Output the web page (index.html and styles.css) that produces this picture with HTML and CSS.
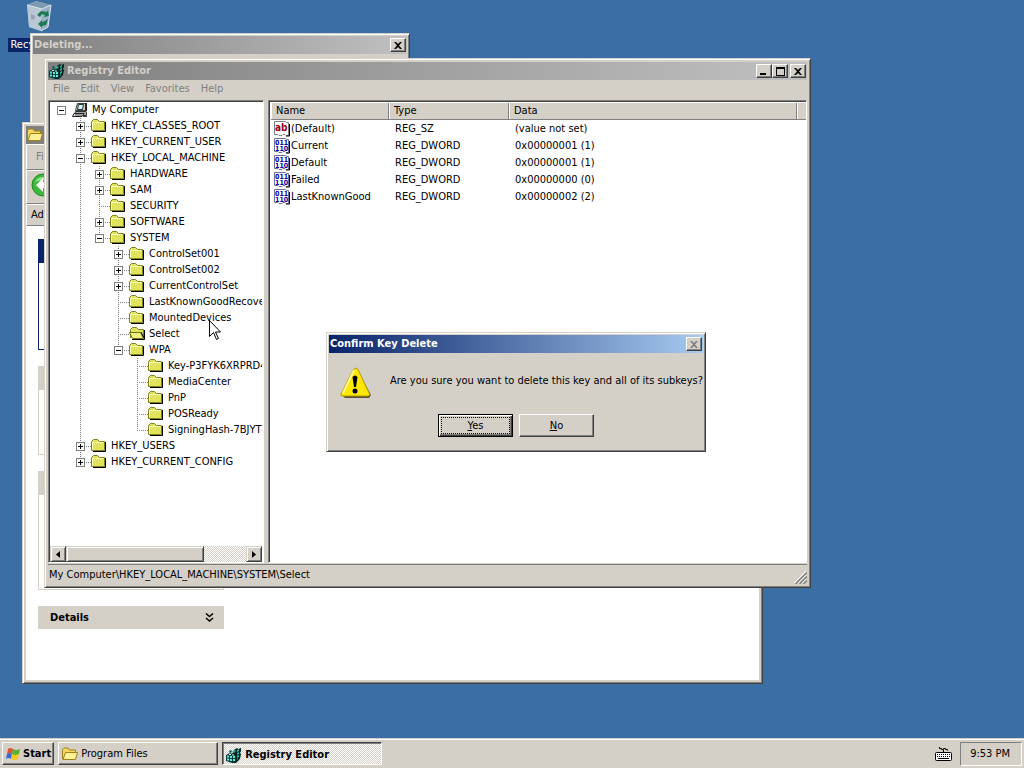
FILE: index.html
```html
<!DOCTYPE html>
<html lang="en">

<head>
    <meta charset="UTF-8">
    <meta name="viewport" content="width=device-width, initial-scale=1.0">
    <title>Registry Editor</title>
    <link rel="stylesheet" href="styles.css">
</head>

<body>
    <!-- icons -->
    <svg class="defs" aria-hidden="true">
        <symbol id="folder" viewBox="0 0 16 16">
            <path d="M2 13.500h12.500V4" fill="none" stroke="#000"/>
            <path d="M.5 12.500v-9l2-2h4l2 2h5v9z" fill="#dfe45c" stroke="#808020"/>
            <path d="M1.500 11.500v-7h11" fill="none" stroke="#ffffc0"/>
        </symbol>
        <symbol id="folder-open" viewBox="0 0 16 16">
            <path d="M1.500 12V3.500l2-2h4l2 2h5V12" fill="#dfe45c" stroke="#808020"/>
            <path d="M.5 6.500h11l3 6h-11z" fill="#f0f080" stroke="#707018"/>
            <path d="M3 13.500h12.500V4M12 6l3 6" fill="none" stroke="#000"/>
        </symbol>
        <symbol id="computer" viewBox="0 0 16 16">
            <path d="M5.500 1.500h8v7h-10z" fill="#d4d0c8" stroke="#404040"/>
            <path d="M6.500 2.500h5l-1 5h-5z" fill="#d8f0f0" stroke="#203838"/>
            <path d="M13 1h2v8l-2 1z" fill="#202020"/>
            <path d="M3.500 9.500h10l1 1v3h-12z" fill="#a8a8a0" stroke="#303030"/>
            <path d="M2 11.500h10l-2 3H.5z" fill="#e8e8e0" stroke="#202020"/>
            <path d="M3 13h7M11 14.500h4" stroke="#404040"/>
        </symbol>
        <symbol id="regedit" viewBox="0 0 16 16">
            <path d="M8 3l3-2 1 1 3-1v3l-1 2 1 1-1 5-4 4H6V7z" fill="#002420"/>
            <path d="M0 8l4-2 6 2v7l-4 1-6-2z" fill="#003c38"/>
            <path d="M1 8.500h2v2H1zM4 9h2v2H4zM7 9h2v2H7zM1 11.500h2v2H1zM4 12h2v2H4zM7 12h2v2H7z" fill="#60e8d8"/>
            <path d="M3 7h2v1H3zM6 7.500h2v1H6z" fill="#e0fff8"/>
            <path d="M6 5l2-2 2 1-2 2zM11 3l2-1v2l-2 1zM11 6l2-1v2l-2 1zM11 9l2-1v2l-2 1zM11 12l1-1v2z" fill="#38b0a0"/>
            <path d="M3 4l2-1 1 2-2 1z" fill="#0c5850"/>
        </symbol>
        <symbol id="yellow-folder" viewBox="0 0 16 16">
            <path d="M.5 13V3.500l1.500-1.500h4l1.500 2h6v3" fill="#f4d860" stroke="#a08018"/>
            <path d="M1 13.500l2.500-7h12l-2 7z" fill="#fff09a" stroke="#a08018"/>
        </symbol>
        <symbol id="val-str" viewBox="0 0 16 16">
            <path d="M.5.500h11l1 1h2v13H12l-1-1H9l-1 1H5l-1-1H.5z" fill="#fff" stroke="#808080"/>
            <path d="M15.500 3v12H12" fill="none" stroke="#000"/>
            <text x="1" y="10" class="ico-ab">ab</text>
        </symbol>
        <symbol id="val-bin" viewBox="0 0 16 16">
            <path d="M.5.500h11l1 1h2v13H12l-1-1H9l-1 1H5l-1-1H.5z" fill="#fff" stroke="#7070a0"/>
            <path d="M15.500 3v12H12" fill="none" stroke="#000"/>
            <text x="1" y="7" class="ico-bin">011</text>
            <text x="1" y="13" class="ico-bin">110</text>
        </symbol>
        <symbol id="close" viewBox="0 0 8 7">
            <path d="M0 0h2l2 2 2-2h2L5 3.500 8 7H6L4 5 2 7H0l3-3.500z"/>
        </symbol>
    </svg>

    <main class="desktop">
        <div class="shortcut">
            <svg width="32" height="32" viewBox="0 0 32 32">
                <path d="M4 5l9-4 15 4-3 22-7 4-12-4z" fill="#a9bdcc" opacity=".85"/>
                <path d="M4 5l9-4 15 4-9 4z" fill="#7e9ab0"/>
                <path d="M4 5l15 4-1 22-12-4z" fill="#c0ced8" opacity=".8"/>
                <path d="M4 5l15 4 9-4-3 22-7 4" fill="none" stroke="#dce6ec"/>
                <path d="M14 15l4-4 6 1 1-2 1 6-5 1 1-2-3-1-2 3zM25 19l-2 6-4 1v2l-4-4 4-4v2l3-1z" fill="#1c7a50"/>
                <path d="M8 14l4 2-1 4-3-1z" fill="#9aa0b8"/>
            </svg>
            <span>Recycle Bin</span>
        </div>

        <section class="window deleting">
            <header class="titlebar">
                <h2>Deleting...</h2>
                <div class="caption-btns">
                    <button type="button" aria-label="Close"><svg width="8" height="7"><use href="#close"/></svg></button>
                </div>
            </header>
        </section>

        <section class="window explorer">
            <header class="titlebar">
                <svg width="16" height="16"><use href="#yellow-folder"/></svg>
            </header>
            <nav class="exp-row exp-menu"><button type="button">File</button></nav>
            <div class="exp-row exp-tools">
                <button type="button" aria-label="Back">
                    <svg width="24" height="24" viewBox="0 0 24 24">
                        <circle cx="12" cy="12" r="11" fill="#3cb83c" stroke="#1f8a28"/>
                        <path d="M4 9a9 9 0 0 1 16 0q-8-4-16 0z" fill="#9be48c"/>
                        <path d="M12 5l-7 7 7 7v-4h7V9h-7z" fill="#fff"/>
                    </svg>
                </button>
            </div>
            <div class="exp-row exp-address">Address</div>
            <div class="exp-body">
                <div class="task-panel primary"><div class="task-head"></div></div>
                <div class="task-panel"><div class="task-head"></div></div>
                <div class="task-panel tall"><div class="task-head"></div></div>
                <div class="task-panel closed">
                    <button type="button" class="task-head">
                        Details
                        <svg width="9" height="9" viewBox="0 0 9 9"><path d="M1 .5l3.500 3 3.500-3M1 5l3.500 3L8 5" fill="none" stroke="#000" stroke-width="1.500"/></svg>
                    </button>
                </div>
            </div>
        </section>

        <section class="window regedit">
            <header class="titlebar">
                <svg width="16" height="16"><use href="#regedit"/></svg>
                <h2>Registry Editor</h2>
                <div class="caption-btns">
                    <button type="button" aria-label="Minimize"><svg width="8" height="7"><path d="M0 5h6v2H0z"/></svg></button>
                    <button type="button" aria-label="Maximize"><svg width="9" height="9"><path d="M0 0h9v9H0zM1 2v6h7V2z" fill-rule="evenodd"/></svg></button>
                    <button type="button" class="close" aria-label="Close"><svg width="8" height="7"><use href="#close"/></svg></button>
                </div>
            </header>
            <nav class="menubar">
                <button type="button">File</button>
                <button type="button">Edit</button>
                <button type="button">View</button>
                <button type="button">Favorites</button>
                <button type="button">Help</button>
            </nav>
            <div class="panes">
                <div class="tree-pane">
                    <ul class="tree root">
                        <li>
                            <div class="node top"><button type="button" class="exp minus" aria-label="Collapse"></button><svg><use href="#computer"/></svg>My Computer</div>
                            <ul class="tree">
                                <li><div class="node"><button type="button" class="exp" aria-label="Expand"></button><svg><use href="#folder"/></svg>HKEY_CLASSES_ROOT</div></li>
                                <li><div class="node"><button type="button" class="exp" aria-label="Expand"></button><svg><use href="#folder"/></svg>HKEY_CURRENT_USER</div></li>
                                <li>
                                    <div class="node"><button type="button" class="exp minus" aria-label="Collapse"></button><svg><use href="#folder"/></svg>HKEY_LOCAL_MACHINE</div>
                                    <ul class="tree">
                                        <li><div class="node"><button type="button" class="exp" aria-label="Expand"></button><svg><use href="#folder"/></svg>HARDWARE</div></li>
                                        <li><div class="node"><button type="button" class="exp" aria-label="Expand"></button><svg><use href="#folder"/></svg>SAM</div></li>
                                        <li><div class="node leaf"><svg><use href="#folder"/></svg>SECURITY</div></li>
                                        <li><div class="node"><button type="button" class="exp" aria-label="Expand"></button><svg><use href="#folder"/></svg>SOFTWARE</div></li>
                                        <li>
                                            <div class="node"><button type="button" class="exp minus" aria-label="Collapse"></button><svg><use href="#folder"/></svg>SYSTEM</div>
                                            <ul class="tree">
                                                <li><div class="node"><button type="button" class="exp" aria-label="Expand"></button><svg><use href="#folder"/></svg>ControlSet001</div></li>
                                                <li><div class="node"><button type="button" class="exp" aria-label="Expand"></button><svg><use href="#folder"/></svg>ControlSet002</div></li>
                                                <li><div class="node"><button type="button" class="exp" aria-label="Expand"></button><svg><use href="#folder"/></svg>CurrentControlSet</div></li>
                                                <li><div class="node leaf"><svg><use href="#folder"/></svg>LastKnownGoodRecovery</div></li>
                                                <li><div class="node leaf"><svg><use href="#folder"/></svg>MountedDevices</div></li>
                                                <li><div class="node leaf"><svg><use href="#folder-open"/></svg>Select</div></li>
                                                <li>
                                                    <div class="node"><button type="button" class="exp minus" aria-label="Collapse"></button><svg><use href="#folder"/></svg>WPA</div>
                                                    <ul class="tree">
                                                        <li><div class="node leaf"><svg><use href="#folder"/></svg>Key-P3FYK6XRPRD4</div></li>
                                                        <li><div class="node leaf"><svg><use href="#folder"/></svg>MediaCenter</div></li>
                                                        <li><div class="node leaf"><svg><use href="#folder"/></svg>PnP</div></li>
                                                        <li><div class="node leaf"><svg><use href="#folder"/></svg>POSReady</div></li>
                                                        <li><div class="node leaf"><svg><use href="#folder"/></svg>SigningHash-7BJYT4</div></li>
                                                    </ul>
                                                </li>
                                            </ul>
                                        </li>
                                    </ul>
                                </li>
                                <li><div class="node"><button type="button" class="exp" aria-label="Expand"></button><svg><use href="#folder"/></svg>HKEY_USERS</div></li>
                                <li><div class="node"><button type="button" class="exp" aria-label="Expand"></button><svg><use href="#folder"/></svg>HKEY_CURRENT_CONFIG</div></li>
                            </ul>
                        </li>
                    </ul>
                    <div class="scrollbar">
                        <button type="button" aria-label="Scroll left"><svg width="4" height="7"><path d="M4 0v7L0 3.500z"/></svg></button>
                        <div class="thumb"></div>
                        <button type="button" aria-label="Scroll right"><svg width="4" height="7"><path d="M0 0v7l4-3.500z"/></svg></button>
                    </div>
                </div>
                <div class="list-pane">
                    <table>
                        <colgroup><col class="c-name"><col class="c-type"><col class="c-data"><col></colgroup>
                        <thead>
                            <tr><th>Name</th><th>Type</th><th>Data</th><td></td></tr>
                        </thead>
                        <tbody>
                            <tr><td><svg><use href="#val-str"/></svg>(Default)</td><td>REG_SZ</td><td>(value not set)</td><td></td></tr>
                            <tr><td><svg><use href="#val-bin"/></svg>Current</td><td>REG_DWORD</td><td>0x00000001 (1)</td><td></td></tr>
                            <tr><td><svg><use href="#val-bin"/></svg>Default</td><td>REG_DWORD</td><td>0x00000001 (1)</td><td></td></tr>
                            <tr><td><svg><use href="#val-bin"/></svg>Failed</td><td>REG_DWORD</td><td>0x00000000 (0)</td><td></td></tr>
                            <tr><td><svg><use href="#val-bin"/></svg>LastKnownGood</td><td>REG_DWORD</td><td>0x00000002 (2)</td><td></td></tr>
                        </tbody>
                    </table>
                </div>
            </div>
            <footer class="statusbar">
                <span>My Computer\HKEY_LOCAL_MACHINE\SYSTEM\Select</span>
                <svg width="13" height="13" viewBox="0 0 13 13">
                    <path d="M0 12L12 0M4 12l8-8M8 12l4-4" stroke="#fff"/>
                    <path d="M1.500 13L13 1.500M5.500 13L13 5.500M9.500 13L13 9.500" stroke="#808080" stroke-width="1.500"/>
                </svg>
            </footer>
        </section>

        <section class="window dialog" role="dialog" aria-labelledby="dlg-title">
            <header class="titlebar active">
                <h2 id="dlg-title">Confirm Key Delete</h2>
                <div class="caption-btns">
                    <button type="button" disabled aria-label="Close"><svg width="8" height="7"><use href="#close"/></svg></button>
                </div>
            </header>
            <div class="message">
                <svg width="32" height="32" viewBox="0 0 32 32">
                    <path d="M17 2l14 26-2 3H5l-2-2z" fill="#55503c"/>
                    <path d="M15 1.500q1.500-1 3 1L29.500 27q.5 2-2 2H2.500Q0 29 1 27L13 3z" fill="#ffe800" stroke="#b89800"/>
                    <path d="M14 3L3 26" stroke="#fff890" stroke-width="2"/>
                    <path d="M12.500 10q2.500-3 5 0l-1.500 10h-2z"/>
                    <circle cx="15" cy="24" r="2.500"/>
                </svg>
                <p>Are you sure you want to delete this key and all of its subkeys?</p>
            </div>
            <div class="actions">
                <button type="button" class="default"><span><u>Y</u>es</span></button>
                <button type="button"><span><u>N</u>o</span></button>
            </div>
        </section>

        <svg class="cursor" width="12" height="21" viewBox="0 0 12 21">
            <path d="M.5.500v16l4-4 3 7 2-1-3-6.500h5z" fill="#fff" stroke="#000"/>
        </svg>
    </main>

    <footer class="taskbar">
        <button type="button" class="start">
            <svg width="16" height="16" viewBox="0 0 16 16">
                <path d="M3 3q2-2 5 0L7 8Q4 6 2 8z" fill="#e8502c"/>
                <path d="M8 3q3 2 7 0l-1 5q-4 2-7 0z" fill="#58b030"/>
                <path d="M2 8q2-2 5 0l-1 5q-3-2-5 0z" fill="#3868d8"/>
                <path d="M7 8q3 2 7 0l-1 5q-4 2-7 0z" fill="#f8c820"/>
            </svg>
            Start
        </button>
        <button type="button" class="task"><svg width="16" height="16"><use href="#yellow-folder"/></svg>Program Files</button>
        <button type="button" class="task pressed"><svg width="16" height="16"><use href="#regedit"/></svg>Registry Editor</button>
        <div class="tray">
            <svg width="17" height="14" viewBox="0 0 17 14">
                <path d="M4.500 0v1.500h2v1h2v-1h2v1h2v1M8.500 3v2" fill="none" stroke="#000"/>
                <rect x=".5" y="5.500" width="16" height="8" rx="1" fill="#fff" stroke="#000"/>
                <path d="M2 7.500h13M2 9.500h13" stroke="#000" stroke-dasharray="1 1"/>
                <path d="M3 11.500h11" stroke="#000"/>
            </svg>
            <time class="clock">9:53 PM</time>
        </div>
    </footer>
</body>

</html>
```

FILE: styles.css
```css
*{
    margin: 0;
    padding: 0;
    box-sizing: border-box;
}
body{
    display: flex;
    flex-direction: column;
    height: 100vh;
    overflow: hidden;
    background: #3a6ea5;
    color: #000;
    font: 11px/16px Tahoma, "DejaVu Sans Condensed", "DejaVu Sans", sans-serif;
    cursor: default;
}
ul{
    list-style: none;
}
button{
    border: 0;
    background: #d4d0c8;
    font: inherit;
    color: inherit;
}
svg{
    flex: none;
}
.defs{
    position: absolute;
    width: 0;
    height: 0;
}
.ico-ab{
    font: bold 10px "DejaVu Sans Condensed", sans-serif;
    fill: #a00010;
}
.ico-bin{
    font: bold 7px "DejaVu Sans Condensed", sans-serif;
    fill: #0000a0;
}

/* desktop */
.desktop{
    position: relative;
    flex: 1;
    min-height: 0;
    overflow: hidden;
}
.shortcut{
    position: absolute;
    left: 0;
    top: 0;
    width: 78px;
    display: flex;
    flex-direction: column;
    align-items: center;
    gap: 6px;
}
.shortcut span{
    padding: 0 2px;
    line-height: 14px;
    background: #0a246a;
    color: #fff;
    white-space: nowrap;
}

/* windows */
.window{
    position: absolute;
    display: flex;
    flex-direction: column;
    padding: 2px;
    background: #d4d0c8;
    border: 1px solid;
    border-color: #d4d0c8 #404040 #404040 #d4d0c8;
    box-shadow: inset 1px 1px #fff, inset -1px -1px #808080;
}
.titlebar{
    display: flex;
    align-items: center;
    flex: none;
    height: 18px;
    padding: 0 1px;
    gap: 2px;
    background: linear-gradient(90deg, #808080, #c0c0c0);
    color: #d4d0c8;
}
.titlebar.active{
    background: linear-gradient(90deg, #0a246a, #a6caf0);
    color: #fff;
}
.titlebar h2{
    font-size: 11px;
    line-height: 18px;
    white-space: nowrap;
}
.caption-btns{
    display: flex;
    margin-left: auto;
}
.caption-btns button{
    display: flex;
    align-items: center;
    justify-content: center;
    width: 16px;
    height: 14px;
    border: 1px solid;
    border-color: #fff #404040 #404040 #fff;
    box-shadow: inset -1px -1px #808080;
}
.caption-btns .close{
    margin-left: 2px;
}
.caption-btns button:disabled{
    fill: #808080;
}
.deleting{
    left: 30px;
    top: 33px;
    right: 614px;
    height: 200px;
}

/* explorer */
.explorer{
    left: 22px;
    top: 122px;
    right: 261px;
    bottom: 54px;
    padding: 3px;
}
.exp-row{
    display: flex;
    align-items: center;
    flex: none;
    padding-left: 4px;
    border: 1px solid;
    border-color: #fff #808080 #808080 #fff;
}
.exp-menu{
    height: 26px;
    padding-left: 9px;
    color: #808080;
}
.exp-tools{
    height: 34px;
}
.exp-address{
    height: 22px;
}
.exp-body{
    display: flex;
    flex-direction: column;
    gap: 16px;
    flex: 1;
    min-height: 0;
    padding: 13px 12px;
    background: #fff;
}
.task-panel{
    flex: none;
    width: 186px;
    height: 89px;
    border: 1px solid #d4d0c8;
}
.task-panel.primary{
    height: 111px;
    border-color: #0a246a;
}
.task-panel.tall{
    height: 119px;
}
.task-panel.closed{
    height: auto;
    border: 0;
}
.task-head{
    display: flex;
    align-items: center;
    justify-content: space-between;
    width: 100%;
    height: 23px;
    padding: 0 10px 0 12px;
    background: #d4d0c8;
    font-weight: bold;
}
.primary .task-head{
    background: #0a246a;
}

/* registry editor */
.regedit{
    left: 44px;
    top: 58px;
    right: 213px;
    bottom: 150px;
    padding: 3px;
}
.menubar{
    display: flex;
    flex: none;
    height: 20px;
    padding-top: 1px;
    padding-left: 5px;
    gap: 11px;
}
.menubar button{
    height: 16px;
    color: #808080;
}
.panes{
    display: flex;
    gap: 4px;
    flex: 1;
    min-height: 0;
}
.tree-pane, .list-pane{
    min-width: 0;
    overflow: hidden;
    background: #fff;
    border: 1px solid;
    border-color: #808080 #fff #fff #808080;
    box-shadow: inset 1px 1px #404040;
}
.tree-pane{
    display: flex;
    flex-direction: column;
    flex: 0 0 216px;
    padding: 1px 1px 0;
}
.list-pane{
    flex: 1;
    padding: 2px 0 0 2px;
}
.tree.root{
    flex: 1;
    min-height: 0;
    margin: 0;
    padding-left: 7px;
    overflow: hidden;
}
.tree{
    margin-left: 19px;
}
/* dotted connector between siblings */
.tree .tree > li{
    background: repeating-linear-gradient(#808080 0 1px, transparent 1px 2px) 4px 0 / 1px 100% no-repeat;
}
.tree .tree > li:last-child{
    background-size: 1px 8px;
}
.node{
    display: flex;
    align-items: center;
    height: 16px;
    white-space: nowrap;
    background: repeating-linear-gradient(90deg, #808080 0 1px, transparent 1px 2px) 4px 8px / 12px 1px no-repeat;
}
.node.top{
    background: none;
}
.node svg{
    width: 16px;
    height: 16px;
    margin: 0 4px 0 6px;
}
.node.leaf{
    padding-left: 9px;
}
.exp{
    width: 9px;
    height: 9px;
    border: 1px solid #808080;
    background: linear-gradient(#000, #000) center / 5px 1px no-repeat, linear-gradient(#000, #000) center / 1px 5px no-repeat, #fff;
}
.exp.minus{
    background: linear-gradient(#000, #000) center / 5px 1px no-repeat, #fff;
}
.scrollbar{
    display: flex;
    flex: none;
    height: 16px;
    background: repeating-conic-gradient(#d4d0c8 0 25%, #fff 0 50%) 0 0 / 2px 2px;
}
.scrollbar button, .thumb{
    display: flex;
    align-items: center;
    justify-content: center;
    flex: none;
    width: 16px;
    background: #d4d0c8;
    border: 1px solid;
    border-color: #d4d0c8 #404040 #404040 #d4d0c8;
    box-shadow: inset 1px 1px #fff, inset -1px -1px #808080;
}
.scrollbar .thumb{
    width: 138px;
    margin-right: auto;
}
table{
    width: 100%;
    table-layout: fixed;
    border-spacing: 0;
}
.c-name{
    width: 118px;
}
.c-type{
    width: 120px;
}
.c-data{
    width: 288px;
}
thead th, thead td{
    height: 17px;
    padding-left: 5px;
    background: #d4d0c8;
    border-right: 1px solid #808080;
    border-bottom: 1px solid #808080;
    box-shadow: inset 1px 0 #fff;
    font-weight: normal;
    text-align: left;
}
thead td{
    border-right: 0;
}
tbody td{
    height: 17px;
    padding-left: 6px;
    white-space: nowrap;
}
tbody td:first-child{
    display: flex;
    align-items: center;
    padding-left: 3px;
    gap: 1px;
}
tbody svg{
    width: 16px;
    height: 16px;
}
.statusbar{
    display: flex;
    align-items: center;
    justify-content: space-between;
    flex: none;
    height: 20px;
    margin-top: 1px;
    padding-left: 1px;
    border-top: 1px solid #808080;
}
.statusbar svg{
    align-self: flex-end;
}

/* confirm dialog */
.dialog{
    left: 326px;
    top: 332px;
}
.message{
    display: flex;
    align-items: center;
    gap: 18px;
    padding: 14px 0 14px 11px;
}
.message p{
    line-height: 28px;
    align-self: flex-start;
    white-space: nowrap;
}
.actions{
    display: flex;
    justify-content: center;
    gap: 6px;
    padding: 1px 0 12px;
}
.actions button{
    width: 75px;
    height: 23px;
    padding: 2px;
    border: 1px solid;
    border-color: #fff #404040 #404040 #fff;
    box-shadow: inset -1px -1px #808080;
}
.actions .default{
    border-color: #000;
    box-shadow: inset 1px 1px #fff, inset -1px -1px #404040, inset -2px -2px #808080;
}
.actions button span{
    display: block;
    border: 1px solid transparent;
    line-height: 15px;
}
.actions .default span{
    border: 1px dotted #000;
}
.cursor{
    position: absolute;
    left: 209px;
    top: 320px;
}

/* taskbar */
.taskbar{
    display: flex;
    flex: none;
    height: 30px;
    padding: 3px 2px 3px;
    gap: 4px;
    background: #d4d0c8;
    border-top: 1px solid #d4d0c8;
    box-shadow: inset 0 1px #fff;
}
.start, .task{
    display: flex;
    align-items: center;
    height: 23px;
    padding: 0 3px;
    gap: 2px;
    border: 1px solid;
    border-color: #fff #404040 #404040 #fff;
    box-shadow: inset -1px -1px #808080;
    white-space: nowrap;
}
.start{
    padding: 0 2px;
    font-weight: bold;
}
.task{
    flex: 0 1 160px;
    gap: 3px;
}
.task.pressed{
    padding-top: 2px;
    border-color: #404040 #fff #fff #404040;
    box-shadow: inset 1px 1px #808080;
    background: repeating-conic-gradient(#d4d0c8 0 25%, #fff 0 50%) 0 0 / 2px 2px;
    font-weight: bold;
}
.tray{
    display: flex;
    align-items: center;
    margin-left: auto;
    gap: 8px;
}
.clock{
    display: flex;
    align-items: center;
    height: 24px;
    padding: 0 11px 0 9px;
    border: 1px solid;
    border-color: #808080 #fff #fff #808080;
}
```
